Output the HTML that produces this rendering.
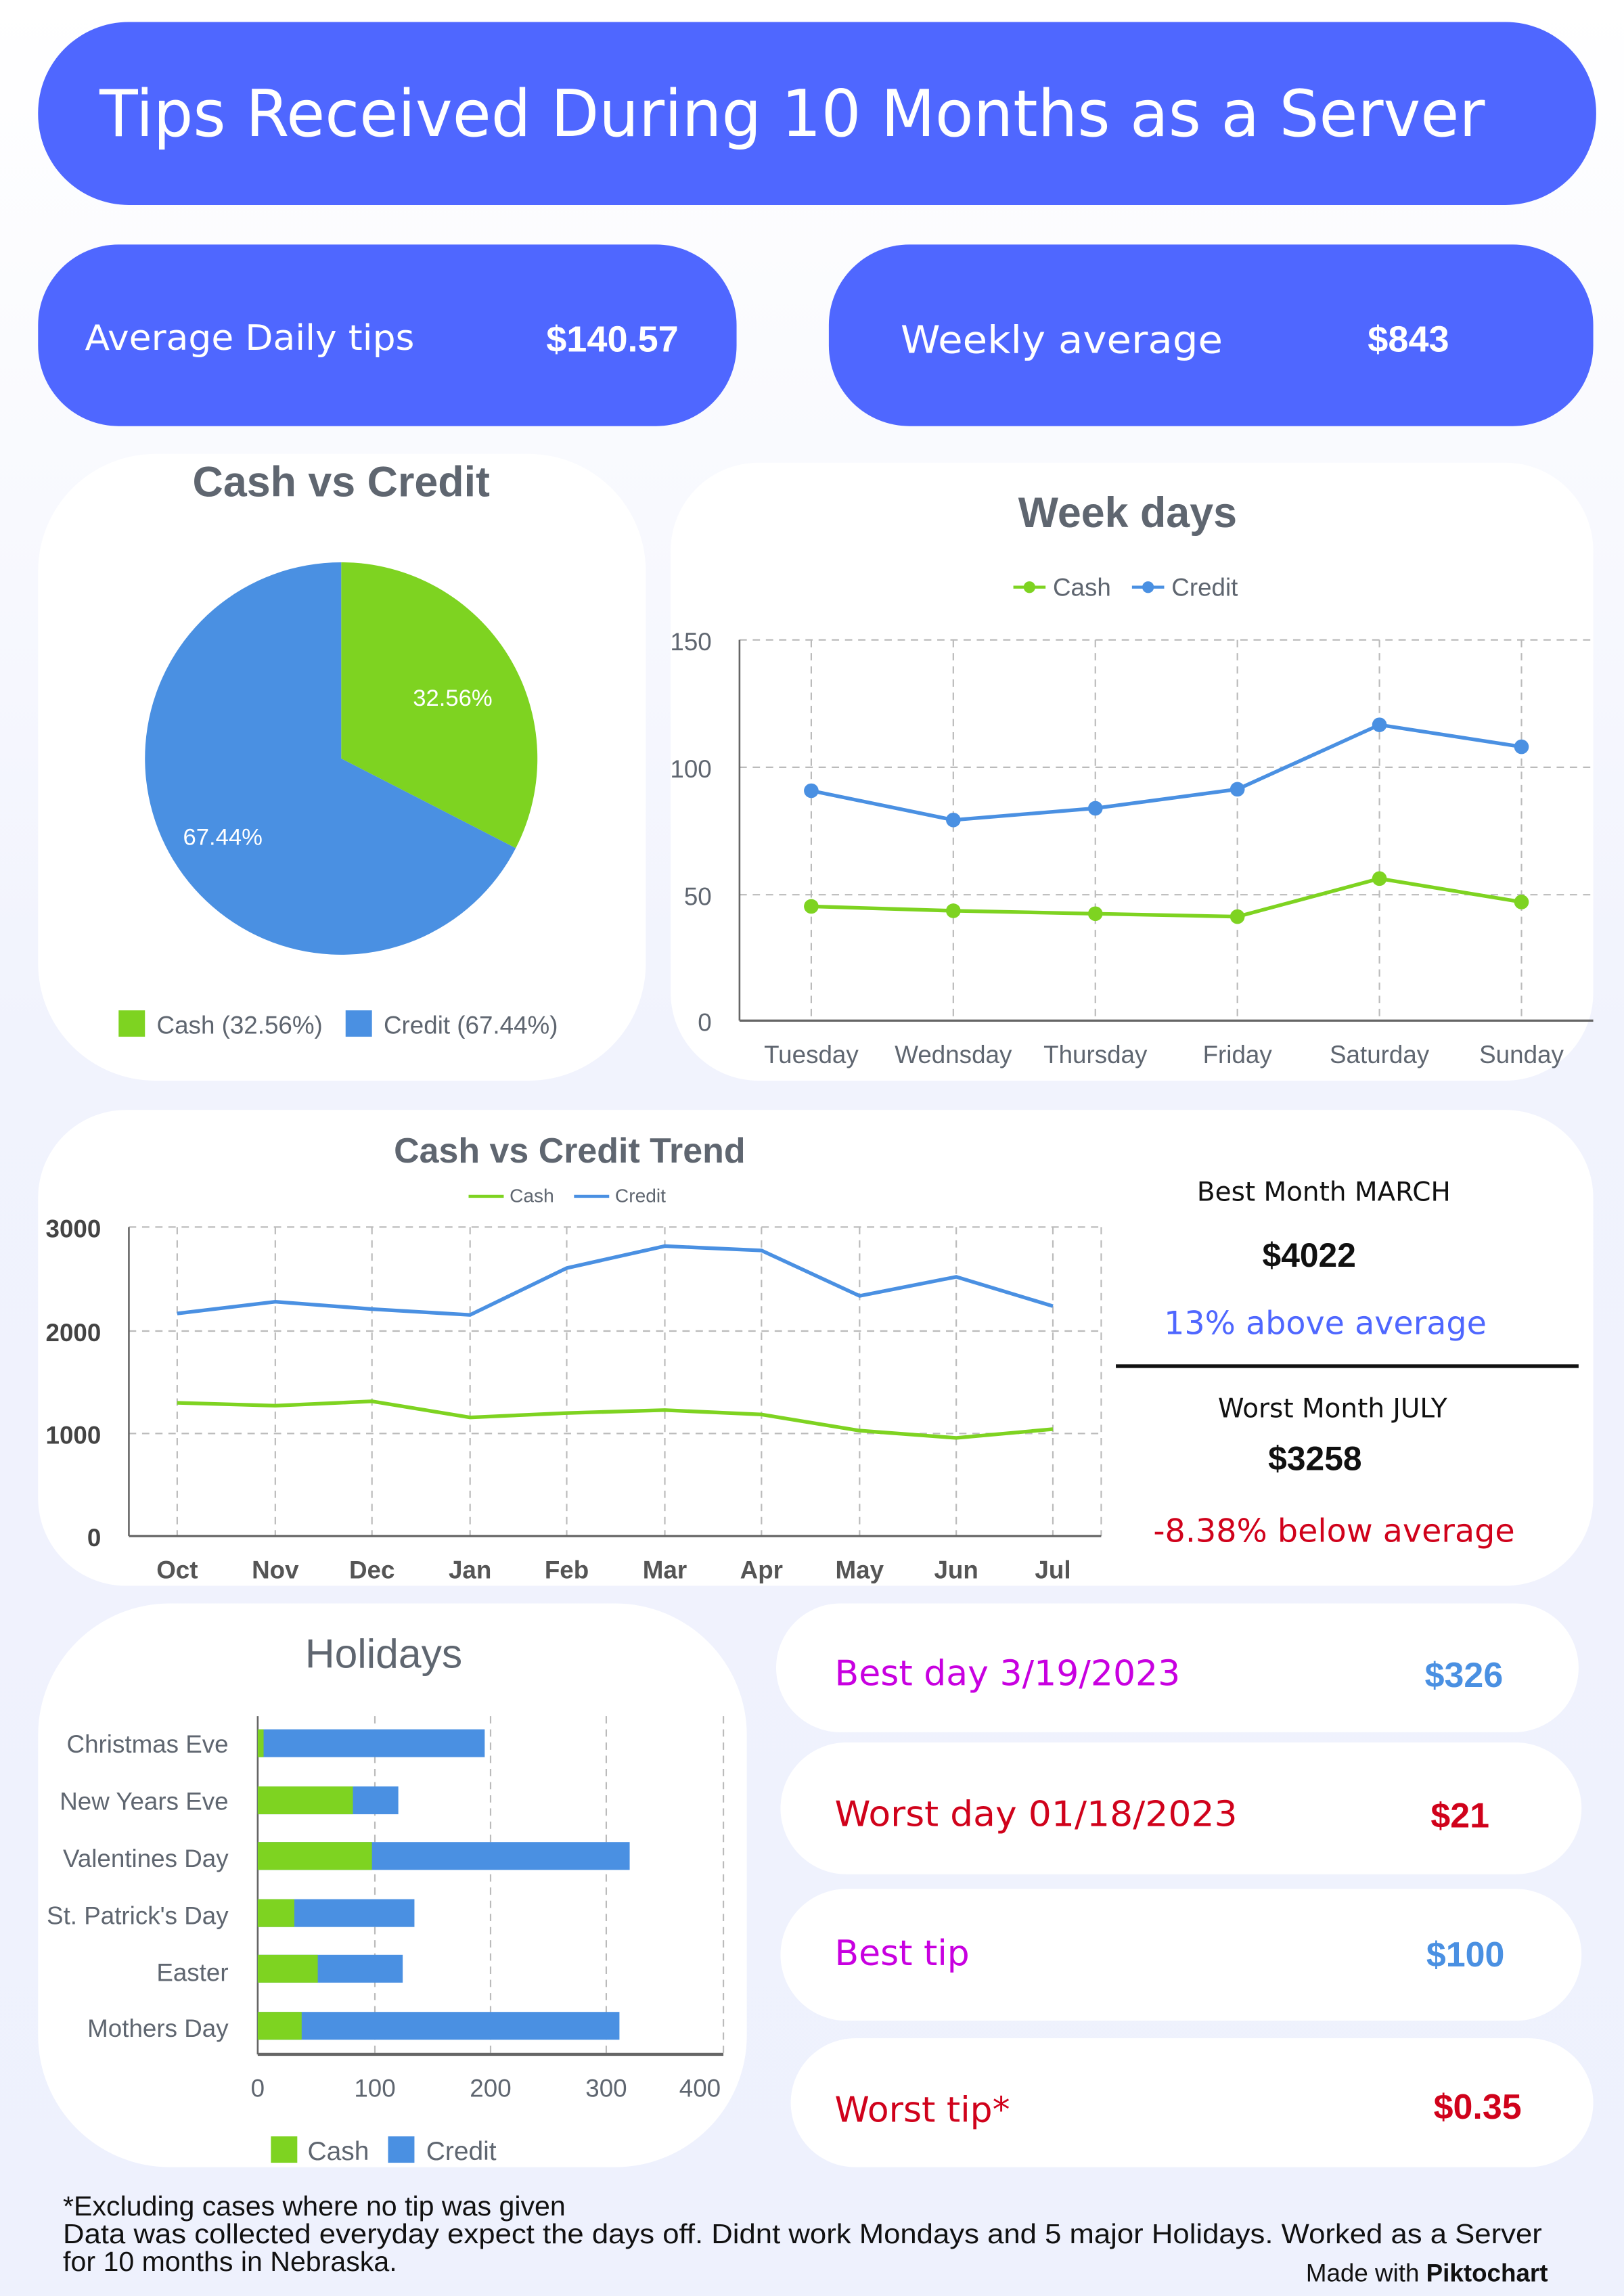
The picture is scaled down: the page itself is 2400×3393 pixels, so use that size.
<!DOCTYPE html>
<html><head><meta charset="utf-8"><style>
html,body{margin:0;padding:0;width:2400px;height:3393px;overflow:hidden}
svg{display:block}
</style></head><body>
<svg width="2400" height="3393" viewBox="0 0 1109 1568" preserveAspectRatio="none" xmlns="http://www.w3.org/2000/svg" font-family="Liberation Sans, DejaVu Sans, sans-serif">
<defs><linearGradient id="bg" x1="0" y1="0" x2="0" y2="1"><stop offset="0" stop-color="#ffffff"/><stop offset="0.45" stop-color="#f1f3fd"/><stop offset="1" stop-color="#eef1fd"/></linearGradient></defs>
<rect width="1109" height="1568" fill="url(#bg)"/>
<!-- title -->
<rect x="26" y="15" width="1064" height="125" rx="62" fill="#4f67ff"/>
<text x="68" y="93" font-size="44" fill="#fff" font-family="DejaVu Sans, sans-serif" textLength="946" lengthAdjust="spacingAndGlyphs">Tips Received During 10 Months as a Server</text>
<!-- stat cards -->
<rect x="26" y="167" width="477" height="124" rx="55" fill="#4f67ff"/>
<text x="58" y="239" font-size="24" fill="#fff" font-family="DejaVu Sans, sans-serif" textLength="225" lengthAdjust="spacingAndGlyphs">Average Daily tips</text>
<text x="373" y="240" font-size="25" fill="#fff" font-weight="bold">$140.57</text>
<rect x="566" y="167" width="522" height="124" rx="55" fill="#4f67ff"/>
<text x="615" y="241" font-size="26" fill="#fff" font-family="DejaVu Sans, sans-serif" textLength="220" lengthAdjust="spacingAndGlyphs">Weekly average</text>
<text x="934" y="240" font-size="25" fill="#fff" font-weight="bold">$843</text>
<!-- pie card -->
<rect x="26" y="310" width="415" height="428" rx="80" fill="#fff"/>
<text x="233" y="339" font-size="29" fill="#5f6670" text-anchor="middle" font-weight="bold">Cash vs Credit</text>
<path d="M233,518 L233,384 A134,134 0 0 1 352.2,579.2 Z" fill="#7ed321"/>
<path d="M233,518 L352.2,579.2 A134,134 0 1 1 233,384 Z" fill="#4a90e2"/>
<text x="282" y="482" font-size="16" fill="#fff">32.56%</text>
<text x="125" y="577" font-size="16" fill="#fff">67.44%</text>
<rect x="81" y="690" width="18" height="18" fill="#7ed321"/>
<text x="107" y="706" font-size="17" fill="#5f6670">Cash (32.56%)</text>
<rect x="236" y="690" width="18" height="18" fill="#4a90e2"/>
<text x="262" y="706" font-size="17" fill="#5f6670">Credit (67.44%)</text>
<!-- week days card -->
<rect x="458" y="316" width="630" height="422" rx="60" fill="#fff"/>
<text x="770" y="360" font-size="29" fill="#5f6670" text-anchor="middle" font-weight="bold">Week days</text>
<line x1="692" y1="401" x2="714" y2="401" stroke="#7ed321" stroke-width="2"/><circle cx="703" cy="401" r="4" fill="#7ed321"/>
<text x="719" y="407" font-size="17" fill="#5f6670">Cash</text>
<line x1="773" y1="401" x2="795" y2="401" stroke="#4a90e2" stroke-width="2"/><circle cx="784" cy="401" r="4" fill="#4a90e2"/>
<text x="800" y="407" font-size="17" fill="#5f6670">Credit</text>
<g stroke="#bbb" stroke-dasharray="5,4" stroke-width="1">
<line x1="505" y1="437" x2="1088" y2="437"/><line x1="505" y1="524" x2="1088" y2="524"/><line x1="505" y1="611" x2="1088" y2="611"/>
<line x1="554" y1="437" x2="554" y2="697"/><line x1="651" y1="437" x2="651" y2="697"/><line x1="748" y1="437" x2="748" y2="697"/><line x1="845" y1="437" x2="845" y2="697"/><line x1="942" y1="437" x2="942" y2="697"/><line x1="1039" y1="437" x2="1039" y2="697"/>
</g>
<line x1="505" y1="437" x2="505" y2="697" stroke="#666" stroke-width="1.2"/>
<line x1="505" y1="697" x2="1088" y2="697" stroke="#666" stroke-width="1.5"/>
<g font-size="17" fill="#5f6670" text-anchor="end"><text x="486" y="444">150</text><text x="486" y="531">100</text><text x="486" y="618">50</text><text x="486" y="704">0</text></g>
<g font-size="17" fill="#5f6670" text-anchor="middle"><text x="554" y="726">Tuesday</text><text x="651" y="726">Wednsday</text><text x="748" y="726">Thursday</text><text x="845" y="726">Friday</text><text x="942" y="726">Saturday</text><text x="1039" y="726">Sunday</text></g>
<polyline points="554,540 651,560 748,552 845,539 942,495 1039,510" fill="none" stroke="#4a90e2" stroke-width="2.5"/>
<g fill="#4a90e2"><circle cx="554" cy="540" r="5"/><circle cx="651" cy="560" r="5"/><circle cx="748" cy="552" r="5"/><circle cx="845" cy="539" r="5"/><circle cx="942" cy="495" r="5"/><circle cx="1039" cy="510" r="5"/></g>
<polyline points="554,619 651,622 748,624 845,626 942,600 1039,616" fill="none" stroke="#7ed321" stroke-width="2.5"/>
<g fill="#7ed321"><circle cx="554" cy="619" r="5"/><circle cx="651" cy="622" r="5"/><circle cx="748" cy="624" r="5"/><circle cx="845" cy="626" r="5"/><circle cx="942" cy="600" r="5"/><circle cx="1039" cy="616" r="5"/></g>
<!-- trend card -->
<rect x="26" y="758" width="1062" height="325" rx="60" fill="#fff"/>
<text x="389" y="794" font-size="24" fill="#5f6670" text-anchor="middle" font-weight="bold">Cash vs Credit Trend</text>
<line x1="320" y1="817" x2="344" y2="817" stroke="#7ed321" stroke-width="2"/><text x="348" y="821" font-size="13" fill="#5f6670">Cash</text>
<line x1="392" y1="817" x2="416" y2="817" stroke="#4a90e2" stroke-width="2"/><text x="420" y="821" font-size="13" fill="#5f6670">Credit</text>
<g stroke="#bbb" stroke-dasharray="5,4" stroke-width="1">
<line x1="88" y1="838" x2="752" y2="838"/><line x1="88" y1="909" x2="752" y2="909"/><line x1="88" y1="979" x2="752" y2="979"/>
<line x1="121" y1="838" x2="121" y2="1049"/><line x1="188" y1="838" x2="188" y2="1049"/><line x1="254" y1="838" x2="254" y2="1049"/><line x1="321" y1="838" x2="321" y2="1049"/><line x1="387" y1="838" x2="387" y2="1049"/><line x1="454" y1="838" x2="454" y2="1049"/><line x1="520" y1="838" x2="520" y2="1049"/><line x1="587" y1="838" x2="587" y2="1049"/><line x1="653" y1="838" x2="653" y2="1049"/><line x1="719" y1="838" x2="719" y2="1049"/><line x1="752" y1="838" x2="752" y2="1049"/>
</g>
<line x1="88" y1="838" x2="88" y2="1049" stroke="#666" stroke-width="1.2"/>
<line x1="88" y1="1049" x2="752" y2="1049" stroke="#666" stroke-width="1.5"/>
<g font-size="17" fill="#444" font-weight="bold" text-anchor="end"><text x="69" y="845">3000</text><text x="69" y="916">2000</text><text x="69" y="986">1000</text><text x="69" y="1056">0</text></g>
<g font-size="17" fill="#555" font-weight="bold" text-anchor="middle"><text x="121" y="1078">Oct</text><text x="188" y="1078">Nov</text><text x="254" y="1078">Dec</text><text x="321" y="1078">Jan</text><text x="387" y="1078">Feb</text><text x="454" y="1078">Mar</text><text x="520" y="1078">Apr</text><text x="587" y="1078">May</text><text x="653" y="1078">Jun</text><text x="719" y="1078">Jul</text></g>
<polyline points="121,897 188,889 254,894 321,898 387,866 454,851 520,854 587,885 653,872 719,892" fill="none" stroke="#4a90e2" stroke-width="2.5"/>
<polyline points="121,958 188,960 254,957 321,968 387,965 454,963 520,966 587,977 653,982 719,976" fill="none" stroke="#7ed321" stroke-width="2.5"/>
<text x="904" y="820" font-size="18" fill="#111" text-anchor="middle" font-family="DejaVu Sans, sans-serif">Best Month MARCH</text>
<text x="894" y="865" font-size="23" fill="#111" text-anchor="middle" font-weight="bold">$4022</text>
<text x="905" y="911" font-size="22" fill="#4f67ff" text-anchor="middle" font-family="DejaVu Sans, sans-serif">13% above average</text>
<line x1="762" y1="933" x2="1078" y2="933" stroke="#111" stroke-width="2.5"/>
<text x="910" y="968" font-size="18" fill="#111" text-anchor="middle" font-family="DejaVu Sans, sans-serif">Worst Month JULY</text>
<text x="898" y="1004" font-size="23" fill="#111" text-anchor="middle" font-weight="bold">$3258</text>
<text x="911" y="1053" font-size="22" fill="#d0021b" text-anchor="middle" font-family="DejaVu Sans, sans-serif">-8.38% below average</text>
<!-- holidays -->
<rect x="26" y="1095" width="484" height="385" rx="90" fill="#fff"/>
<text x="262" y="1139" font-size="28" fill="#5f6670" text-anchor="middle">Holidays</text>
<g stroke="#bbb" stroke-dasharray="5,4" stroke-width="1">
<line x1="256" y1="1172" x2="256" y2="1403"/><line x1="335" y1="1172" x2="335" y2="1403"/><line x1="414" y1="1172" x2="414" y2="1403"/><line x1="494" y1="1172" x2="494" y2="1403"/>
</g>
<line x1="176" y1="1172" x2="176" y2="1403" stroke="#666" stroke-width="1.2"/>
<line x1="176" y1="1403" x2="494" y2="1403" stroke="#666" stroke-width="2"/>
<g fill="#4a90e2"><rect x="176" y="1181" width="155" height="19"/><rect x="176" y="1220" width="96" height="19"/><rect x="176" y="1258" width="254" height="19"/><rect x="176" y="1297" width="107" height="19"/><rect x="176" y="1335" width="99" height="19"/><rect x="176" y="1374" width="247" height="19"/></g>
<g fill="#7ed321"><rect x="176" y="1181" width="4" height="19"/><rect x="176" y="1220" width="65" height="19"/><rect x="176" y="1258" width="78" height="19"/><rect x="176" y="1297" width="25" height="19"/><rect x="176" y="1335" width="41" height="19"/><rect x="176" y="1374" width="30" height="19"/></g>
<g font-size="17" fill="#5f6670" text-anchor="end"><text x="156" y="1197">Christmas Eve</text><text x="156" y="1236">New Years Eve</text><text x="156" y="1275">Valentines Day</text><text x="156" y="1314">St. Patrick's Day</text><text x="156" y="1353">Easter</text><text x="156" y="1391">Mothers Day</text></g>
<g font-size="17" fill="#5f6670" text-anchor="middle"><text x="176" y="1432">0</text><text x="256" y="1432">100</text><text x="335" y="1432">200</text><text x="414" y="1432">300</text><text x="478" y="1432">400</text></g>
<rect x="185" y="1459" width="18" height="18" fill="#7ed321"/><text x="210" y="1475" font-size="18" fill="#5f6670">Cash</text>
<rect x="265" y="1459" width="18" height="18" fill="#4a90e2"/><text x="291" y="1475" font-size="18" fill="#5f6670">Credit</text>
<!-- right cards -->
<rect x="530" y="1095" width="548" height="88" rx="44" fill="#fff"/>
<text x="570" y="1151" font-size="24" fill="#c800e0" font-family="DejaVu Sans, sans-serif" textLength="236" lengthAdjust="spacingAndGlyphs">Best day 3/19/2023</text>
<text x="973" y="1152" font-size="24" fill="#4a90e2" font-weight="bold">$326</text>
<rect x="533" y="1190" width="547" height="90" rx="45" fill="#fff"/>
<text x="570" y="1247" font-size="24" fill="#d0021b" font-family="DejaVu Sans, sans-serif" textLength="275" lengthAdjust="spacingAndGlyphs">Worst day  01/18/2023</text>
<text x="977" y="1248" font-size="24" fill="#d0021b" font-weight="bold">$21</text>
<rect x="533" y="1290" width="547" height="90" rx="45" fill="#fff"/>
<text x="570" y="1342" font-size="24" fill="#c800e0" font-family="DejaVu Sans, sans-serif">Best tip</text>
<text x="974" y="1343" font-size="24" fill="#4a90e2" font-weight="bold">$100</text>
<rect x="540" y="1392" width="548" height="88" rx="44" fill="#fff"/>
<text x="570" y="1449" font-size="24" fill="#d0021b" font-family="DejaVu Sans, sans-serif">Worst tip*</text>
<text x="979" y="1447" font-size="24" fill="#d0021b" font-weight="bold">$0.35</text>
<!-- footer -->
<g font-size="19" fill="#111">
<text x="43" y="1513">*Excluding cases where no tip was given</text>
<text x="43" y="1532" textLength="1010" lengthAdjust="spacingAndGlyphs">Data was collected everyday expect the days off. Didnt work Mondays and 5 major Holidays. Worked as a Server</text>
<text x="43" y="1551">for 10 months in Nebraska.</text>
</g>
<text x="1057" y="1558" font-size="17" fill="#111" text-anchor="end">Made with <tspan font-weight="bold">Piktochart</tspan></text>
</svg>
</body></html>
